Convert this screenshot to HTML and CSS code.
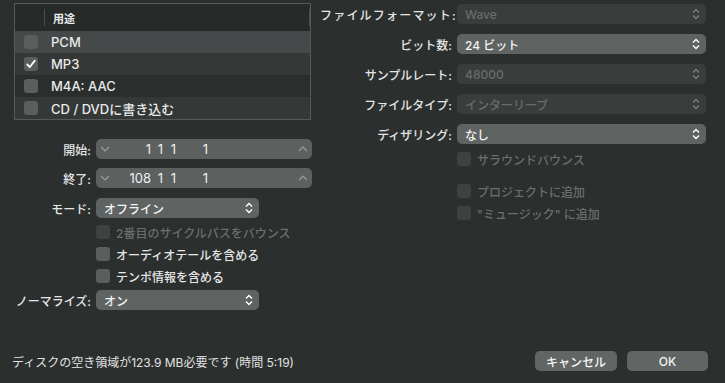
FILE: index.html
```html
<!DOCTYPE html>
<html lang="ja">
<head>
  <meta charset="UTF-8">
  <meta name="viewport" content="width=device-width, initial-scale=1">
  <title>バウンス</title>
  <link rel="stylesheet" href="styles.css">
</head>
<body>

  <div class="window">
    <div class="main">

      <div class="left">
        <div class="list">
          <div class="list-head">
            <span class="head-sep"></span>
            <span class="head-title">用途</span>
            <span class="head-sep"></span>
          </div>
          <div class="list-row selected"><span class="check"></span>PCM</div>
          <div class="list-row alt">
            <span class="check">
              <svg width="14" height="14" viewBox="0 0 14 14"><path d="M3.2 7.4 L5.8 10 L10.8 3.6" fill="none" stroke="#fff" stroke-width="1.8" stroke-linecap="round" stroke-linejoin="round"/></svg>
            </span>MP3
          </div>
          <div class="list-row"><span class="check"></span>M4A: AAC</div>
          <div class="list-row alt"><span class="check"></span>CD / DVDに書き込む</div>
        </div>

        <div class="field-row first">
          <span class="label">開始:</span>
          <div class="stepper">
            <svg class="chev" width="10" height="6" viewBox="0 0 10 6"><path d="M1 1 L5 5 L9 1" fill="none" stroke="#9a9e9d" stroke-width="1.2"/></svg>
            <span class="num n2">1</span><span class="num n3">1</span><span class="num n4">1</span><span class="num n5">1</span>
            <svg class="chev up" width="10" height="6" viewBox="0 0 10 6"><path d="M1 5 L5 1 L9 5" fill="none" stroke="#9a9e9d" stroke-width="1.2"/></svg>
          </div>
        </div>

        <div class="field-row">
          <span class="label">終了:</span>
          <div class="stepper">
            <svg class="chev" width="10" height="6" viewBox="0 0 10 6"><path d="M1 1 L5 5 L9 1" fill="none" stroke="#9a9e9d" stroke-width="1.2"/></svg>
            <span class="num n2">108</span><span class="num n3">1</span><span class="num n4">1</span><span class="num n5">1</span>
            <svg class="chev up" width="10" height="6" viewBox="0 0 10 6"><path d="M1 5 L5 1 L9 5" fill="none" stroke="#9a9e9d" stroke-width="1.2"/></svg>
          </div>
        </div>

        <div class="field-row mid">
          <span class="label">モード:</span>
          <div class="select short">オフライン
            <svg class="updown" width="8" height="12" viewBox="0 0 8 12"><path d="M1 4.5 L4 1.5 L7 4.5 M1 7.5 L4 10.5 L7 7.5" fill="none" stroke="#fff" stroke-width="1.4"/></svg>
          </div>
        </div>

        <div class="check-row gap">
          <span class="check dim"></span><span class="dim-text">2番目のサイクルパスをバウンス</span>
        </div>
        <div class="check-row">
          <span class="check"></span>オーディオテールを含める
        </div>
        <div class="check-row">
          <span class="check"></span>テンポ情報を含める
        </div>

        <div class="field-row last">
          <span class="label">ノーマライズ:</span>
          <div class="select short">オン
            <svg class="updown" width="8" height="12" viewBox="0 0 8 12"><path d="M1 4.5 L4 1.5 L7 4.5 M1 7.5 L4 10.5 L7 7.5" fill="none" stroke="#fff" stroke-width="1.4"/></svg>
          </div>
        </div>
      </div>

      <div class="right">
        <div class="field-row r">
          <span class="label spaced">ファイルフォーマット:</span>
          <div class="select wide off">Wave
            <svg class="updown" width="8" height="12" viewBox="0 0 8 12"><path d="M1 4.5 L4 1.5 L7 4.5 M1 7.5 L4 10.5 L7 7.5" fill="none" stroke="#7a7e7d" stroke-width="1.4"/></svg>
          </div>
        </div>
        <div class="field-row r">
          <span class="label">ビット数:</span>
          <div class="select wide">24 ビット
            <svg class="updown" width="8" height="12" viewBox="0 0 8 12"><path d="M1 4.5 L4 1.5 L7 4.5 M1 7.5 L4 10.5 L7 7.5" fill="none" stroke="#fff" stroke-width="1.4"/></svg>
          </div>
        </div>
        <div class="field-row r">
          <span class="label">サンプルレート:</span>
          <div class="select wide off">48000
            <svg class="updown" width="8" height="12" viewBox="0 0 8 12"><path d="M1 4.5 L4 1.5 L7 4.5 M1 7.5 L4 10.5 L7 7.5" fill="none" stroke="#7a7e7d" stroke-width="1.4"/></svg>
          </div>
        </div>
        <div class="field-row r">
          <span class="label">ファイルタイプ:</span>
          <div class="select wide off">インターリーブ
            <svg class="updown" width="8" height="12" viewBox="0 0 8 12"><path d="M1 4.5 L4 1.5 L7 4.5 M1 7.5 L4 10.5 L7 7.5" fill="none" stroke="#7a7e7d" stroke-width="1.4"/></svg>
          </div>
        </div>
        <div class="field-row r">
          <span class="label">ディザリング:</span>
          <div class="select wide">なし
            <svg class="updown" width="8" height="12" viewBox="0 0 8 12"><path d="M1 4.5 L4 1.5 L7 4.5 M1 7.5 L4 10.5 L7 7.5" fill="none" stroke="#fff" stroke-width="1.4"/></svg>
          </div>
        </div>

        <div class="check-row r surround">
          <span class="check dim"></span><span class="dim-text">サラウンドバウンス</span>
        </div>
        <div class="check-row r project">
          <span class="check dim"></span><span class="dim-text">プロジェクトに追加</span>
        </div>
        <div class="check-row r">
          <span class="check dim"></span><span class="dim-text">"ミュージック" に追加</span>
        </div>
      </div>

    </div>

    <div class="footer">
      <span class="disk">ディスクの空き領域が123.9 MB必要です (時間 5:19)</span>
      <button class="btn cancel">キャンセル</button>
      <button class="btn ok">OK</button>
    </div>
  </div>

</body>
</html>
```

FILE: styles.css
```css
body {
  margin: 0;
  background-color: #2b2f2e;
  color: #e6e7e7;
  font-family: "Inter", "Noto Sans CJK JP", sans-serif;
  font-size: 12px;
  overflow: hidden;
}

.window {
  width: 725px;
  height: 383px;
  display: flex;
  flex-direction: column;
}

.main {
  flex: 1;
  display: flex;
}

.left {
  width: 320px;
}

.right {
  flex: 1;
}

/* liste des formats */
.list {
  margin: 3px 0 0 14px;
  width: 295px;
  border: 1px solid #555a59;
  background: #2a2e2d;
}

.list-head {
  height: 27px;
  display: flex;
  align-items: center;
  background: #262a29;
}

.head-sep {
  width: 1px;
  height: 17px;
  background: #4a4f4e;
  margin-left: 29px;
}

.head-sep:last-child {
  margin-left: 0;
}

.head-title {
  flex: 1;
  padding-left: 8px;
  font-size: 11px;
  font-weight: 700;
  color: #e8e9e9;
}

.list-row {
  height: 22px;
  display: flex;
  align-items: center;
  padding-left: 9px;
  font-size: 13px;
  font-weight: 500;
  color: #e9eaea;
}

.list-row .check {
  margin-right: 13px;
}

.list-row.alt {
  background: #343837;
}

.list-row.selected {
  background: #464949;
}

.check {
  width: 14px;
  height: 14px;
  border-radius: 3px;
  background: #5a5e5d;
  flex-shrink: 0;
  display: flex;
}

.check.dim {
  background: #3d4140;
}

.dim-text {
  color: #6a6e6d;
}

/* lignes du formulaire */
.field-row {
  height: 20px;
  display: flex;
  align-items: center;
  margin-top: 9px;
}

.field-row.first {
  margin-top: 19px;
}

.field-row.mid {
  margin-top: 10px;
}

.field-row.last {
  margin-top: 3px;
}

.field-row.r {
  margin-top: 10px;
}

.field-row.r:first-child {
  margin-top: 4px;
}

.label {
  width: 91px;
  padding-right: 5px;
  text-align: right;
  font-weight: 500;
  color: #e4e5e5;
  white-space: nowrap;
}

.r .label {
  width: 132px;
}

.label.spaced {
  letter-spacing: 1.2px;
}

.check-row {
  height: 22px;
  display: flex;
  align-items: center;
  padding-left: 96px;
  font-weight: 500;
}

.check-row .check {
  margin-right: 6px;
}

.check-row.gap {
  margin-top: 3px;
}

.check-row.r {
  padding-left: 137px;
}

.check-row.surround {
  margin-top: 4px;
}

.check-row.project {
  margin-top: 10px;
}

.stepper {
  width: 216px;
  height: 20px;
  border-radius: 5px;
  background: #5c605f;
  display: flex;
  align-items: center;
  font-size: 13px;
  color: #eeefef;
}

.chev {
  margin-left: 4px;
}

.chev.up {
  margin-left: auto;
  margin-right: 4px;
}

.num {
  text-align: right;
}

.n2 { width: 41px; }
.n3 { width: 12px; }
.n4 { width: 13px; }
.n5 { width: 32px; }

.select {
  height: 20px;
  border-radius: 5px;
  background: #5f6362;
  display: flex;
  align-items: center;
  padding-left: 8px;
  font-size: 12px;
  font-weight: 500;
  color: #f2f3f3;
  box-sizing: border-box;
}

.select.short {
  width: 163px;
}

.select.wide {
  width: 249px;
}

.select.off {
  background: #393d3c;
  color: #696d6c;
}

.updown {
  margin-left: auto;
  margin-right: 6px;
}

/* bas de la fenetre */
.footer {
  height: 20px;
  display: flex;
  align-items: center;
  padding: 0 17px 12px 12px;
}

.disk {
  flex: 1;
  font-size: 12px;
  color: #e2e3e3;
}

.btn {
  height: 20px;
  border: none;
  border-radius: 5px;
  background: #616564;
  color: #f4f5f5;
  font-family: inherit;
  font-size: 12px;
  font-weight: 500;
  padding: 0;
}

.cancel {
  width: 82px;
}

.ok {
  width: 81px;
  margin-left: 10px;
}
```
